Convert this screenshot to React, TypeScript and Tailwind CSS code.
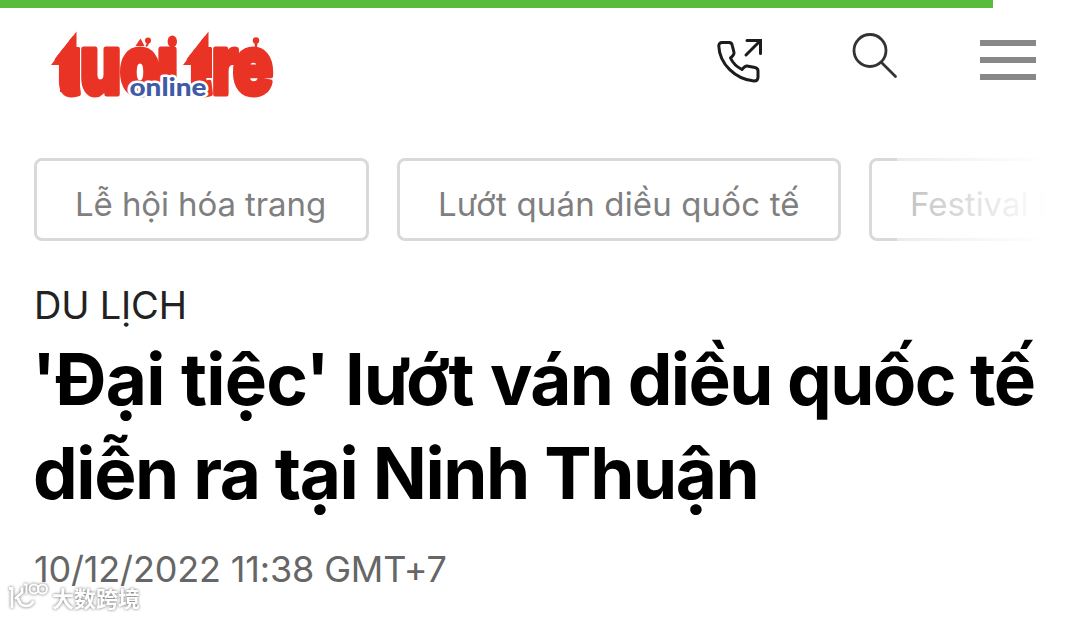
import { clsx } from "clsx";

const TOPICS = ["Lễ hội hóa trang", "Lướt quán diều quốc tế", "Festival Dù lượn"];

// x and width of every letter in the wordmark
const LETTERS = [
  { char: "t", x: 56, width: 24, clip: "url(#t-left)" },
  { char: "u", x: 80, width: 41 },
  { char: "o", x: 120, width: 40 },
  { char: "ı", x: 157, width: 21 },
  { char: "t", x: 188, width: 24, clip: "url(#t-right)" },
  { char: "r", x: 212, width: 26 },
  { char: "e", x: 233, width: 40 },
];

function Logo() {
  return (
    <svg
      viewBox="48 26 230 76"
      className="h-[76px] w-[230px] overflow-visible"
      aria-label="Tuổi Trẻ Online"
    >
      <clipPath id="t-left">
        <path d="M50 65 76 32v15h5v52H50z" />
      </clipPath>
      <clipPath id="t-right">
        <path d="M182 65 208 32v15h5v52h-31z" />
      </clipPath>
      <g fill="#e93325" stroke="#e93325" strokeWidth="5" strokeLinejoin="round">
        {LETTERS.map((l) => (
          <g key={l.x} clipPath={l.clip}>
            <text
              x={l.x}
              y="94"
              fontFamily="Inter, sans-serif"
              fontWeight="900"
              fontSize="82"
              textLength={l.width}
              lengthAdjust="spacingAndGlyphs"
            >
              {l.char}
            </text>
          </g>
        ))}
      </g>
      <g fill="#e93325">
        <path d="M51 65 76.500 31.500V48H80v17z" />
        <path d="M183 65 208.500 31.500V48H212v17z" />
        <path d="M60 60h20v32H60zM192 60h20v18h-20z" />
        <path d="M135.500 46l5-7.500 4 7.500z" />
        <circle cx="148" cy="40.500" r="3" />
        <path d="M150.500 41 147 47l-1.500-1 2-5z" />
        <ellipse cx="172.300" cy="41.500" rx="4.700" ry="6" />
        <circle cx="256" cy="40.500" r="3.200" />
        <path d="M254.500 42h3l-.5 6h-2z" />
      </g>
      <text
        x="129.500"
        y="96"
        fontFamily="Lato, sans-serif"
        fontWeight="900"
        fontSize="25"
        fill="#3f5ba5"
        stroke="#fff"
        strokeWidth="5"
        strokeLinejoin="round"
        paintOrder="stroke"
        textLength="77"
        lengthAdjust="spacingAndGlyphs"
      >
        online
      </text>
    </svg>
  );
}

function CallIcon() {
  return (
    <svg
      viewBox="0 0 60 60"
      className="size-[60px]"
      fill="none"
      stroke="#1c1c1c"
      strokeWidth="3"
      strokeLinejoin="round"
    >
      <path d="M12 14.500h7c2 0 3 1 3.300 3l1.700 7c.4 2-.5 3-3.500 5.500C23 35.500 27 39 32 41.500c2-2.500 3-3.800 5-3.500l8 1.500c2 .4 3 1.500 3 3.500v6c0 2.500-1.500 4-4 4C25.500 51.500 9.500 36 8.800 18c0-2.200 1.200-3.500 3.200-3.500z" />
      <path d="M36 27 50 13M37 12.500h13.500V25.500" strokeLinejoin="miter" strokeLinecap="round" />
    </svg>
  );
}

function SearchIcon() {
  return (
    <svg viewBox="0 0 50 50" className="size-[50px]" fill="none" stroke="#333" strokeWidth="2.800">
      <circle cx="20" cy="20.500" r="16" />
      <path d="M31.500 32.500 45.500 46.500" strokeLinecap="round" />
    </svg>
  );
}

function Header() {
  return (
    <header className="flex h-[150px] items-start pt-[18px] pl-12">
      <Logo />
      <div className="ml-[432px] pt-0.5">
        <CallIcon />
      </div>
      <div className="ml-20 pt-1">
        <SearchIcon />
      </div>
      <div className="mt-3.5 ml-20 flex w-14 flex-col gap-[11px]">
        <span className="h-1.5 bg-[#888]" />
        <span className="h-1.5 bg-[#888]" />
        <span className="h-1.5 bg-[#888]" />
      </div>
    </header>
  );
}

function Topics() {
  return (
    <nav className="relative flex h-[83px] w-[1045px] gap-7 overflow-hidden pl-[34px]">
      {TOPICS.map((topic, i) => (
        <a
          key={topic}
          className={clsx(
            "flex shrink-0 items-center rounded-lg border-3 border-[#d9d9d9] pt-2.5 pl-[38px] text-[33px] whitespace-nowrap text-[#7f7f7f]",
            i === 0 && "w-[335px] tracking-[-0.1px]",
            i === 1 && "w-[444px] tracking-[0.15px]",
            i === 2 && "w-[360px]",
          )}
        >
          {topic}
        </a>
      ))}
      <div className="absolute inset-y-0 right-0 w-[148px] bg-linear-to-r from-white/50 to-white" />
    </nav>
  );
}

function Watermark() {
  return (
    <div className="absolute top-[581px] left-2 flex items-center gap-1 drop-shadow-[0_0_1.5px_#666]">
      <svg viewBox="0 0 40 32" className="h-8 w-10" fill="none" stroke="#fff" strokeWidth="2.800">
        <path d="M1 7.500h3V27M14 6.500v5L7 18M10 17c2 10 12 10 15.500 3" />
        <path d="M16 3.500h2.500V13" strokeWidth="2" />
        <circle cx="26" cy="8" r="4.500" strokeWidth="2" />
        <circle cx="34.500" cy="8" r="4.500" strokeWidth="2" />
      </svg>
      <span className="font-['Noto_Sans_CJK_SC',sans-serif] text-[22px] leading-8 font-bold text-white">
        大数跨境
      </span>
    </div>
  );
}

export default function App() {
  return (
    <div className="relative h-[618px] w-[1080px] overflow-hidden bg-white font-['Inter',sans-serif]">
      <div className="h-2 w-[993px] bg-[#58bd3c]" />
      <Header />
      <Topics />
      <main className="pl-[34px]">
        <p className="mt-10 text-[38px] leading-[48px] tracking-[-0.2px] text-[#222]">DU LỊCH</p>
        <h1 className="mt-[3px] text-[71px] leading-[94px] font-bold whitespace-nowrap text-black">
          <span className="-ml-0.5 tracking-[-0.740px]">'Đại tiệc' lướt </span>
          <span className="tracking-[-1.600px]">ván diều quốc tế</span>
          <br />
          <span className="-ml-px tracking-[-1.430px]">diễn ra tại Ninh Thuận</span>
        </h1>
        <p className="mt-[27px] text-[36px] leading-[44px] tracking-[-0.160px] text-[#666]">
          10/12/2022 11:38 GMT+7
        </p>
      </main>
      <Watermark />
    </div>
  );
}
